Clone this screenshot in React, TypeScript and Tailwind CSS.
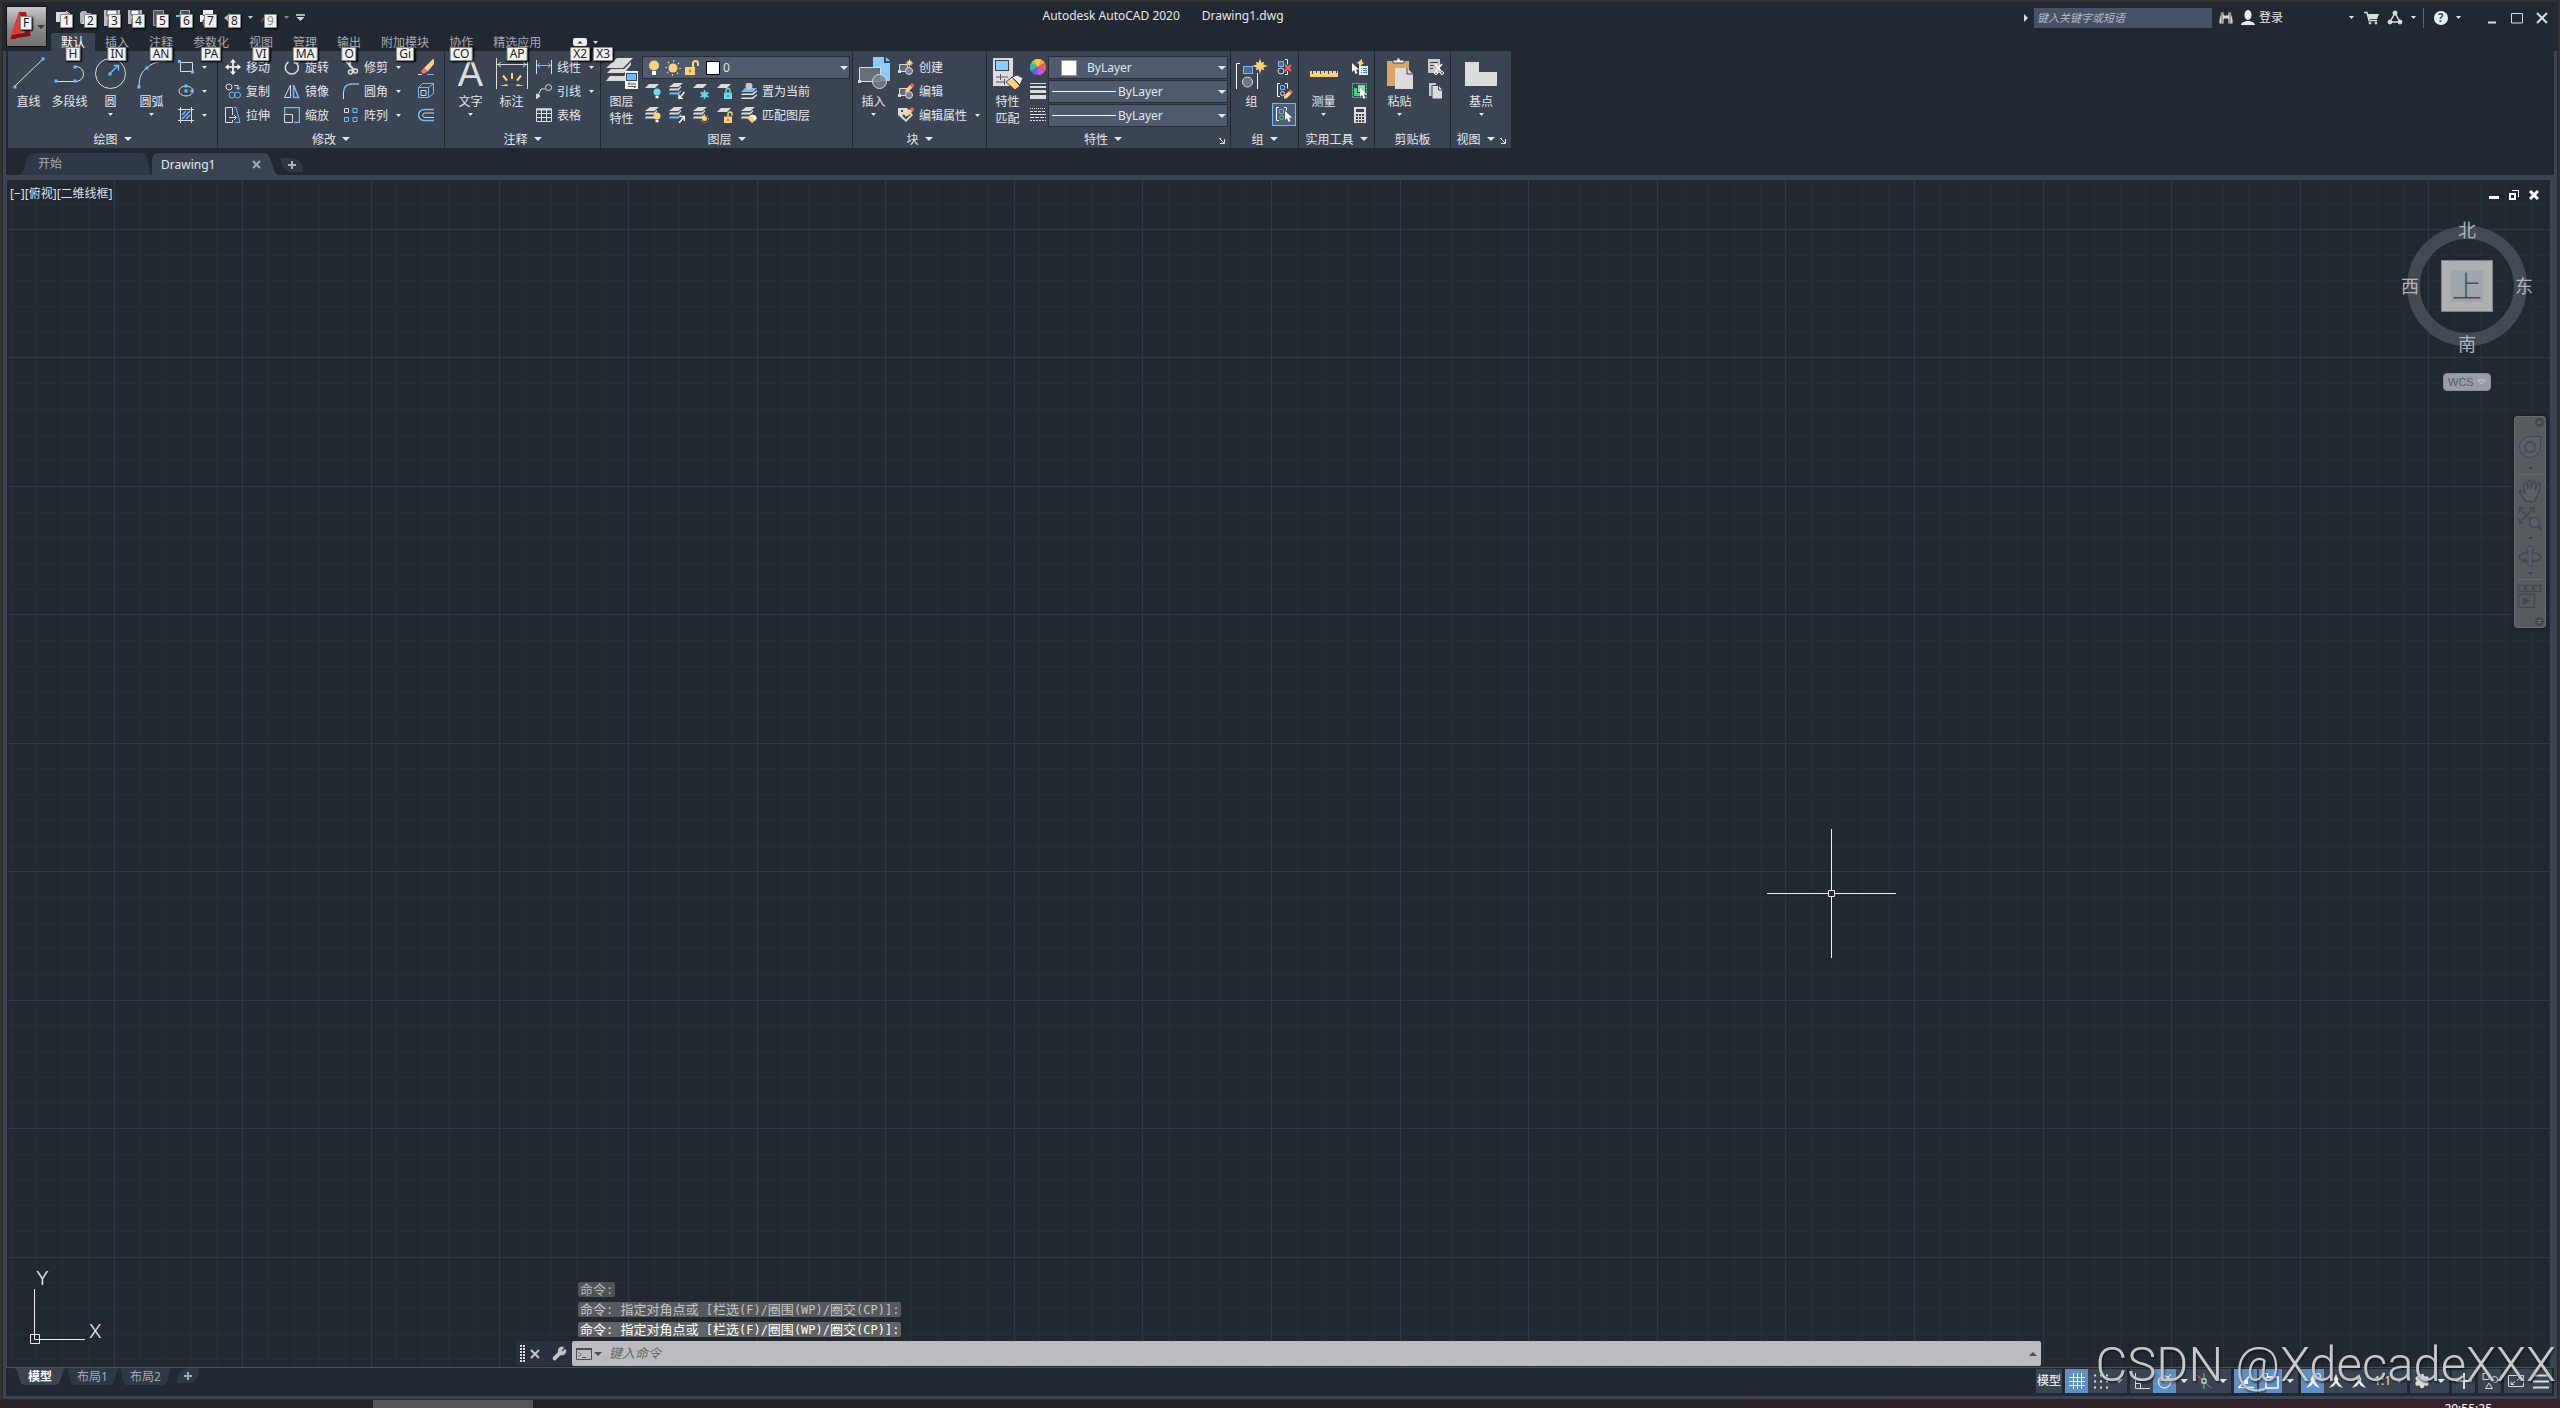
import type { ReactNode } from "react";
import { Settings, Wrench } from "lucide-react";

const W = "#dcdcdc";
const B = "#6cbcff";
const Y = "#ffd27a";
const C = "#6adbe6";
const R = "#ff5d5d";
const G = "#4fd07a";
const D = "#3b4453";

function Svg(props: { w?: number; h?: number; children: ReactNode }) {
  const w = props.w ?? 16;
  const h = props.h ?? w;
  return (
    <svg width={w} height={h} viewBox={`0 0 ${w} ${h}`} fill="none" stroke={W} className="shrink-0">
      {props.children}
    </svg>
  );
}

function Caret(props: { small?: boolean; className?: string }) {
  return props.small ? (
    <svg width="5" height="3" viewBox="0 0 5 3" className={`shrink-0 ${props.className ?? ""}`}>
      <path d="M0 0h5L2.5 3z" fill="currentColor" />
    </svg>
  ) : (
    <svg width="8" height="4" viewBox="0 0 8 4" className={`shrink-0 ${props.className ?? ""}`}>
      <path d="M0 0h8L4 4z" fill="currentColor" />
    </svg>
  );
}

function Dot(props: { x: number; y: number }) {
  return <rect x={props.x - 1.5} y={props.y - 1.5} width="3" height="3" fill={B} stroke="none" />;
}

function Sheet(props: { y: number; fill?: string }) {
  return <path d={`M4 ${props.y}h10l-4 4H0z`} fill={props.fill ?? W} stroke="none" />;
}

function Sheets(props: { last?: string }) {
  return (
    <g stroke="none" fill={W}>
      <path d="M5 0h9L9.500 4H0z" />
      <path d="M0 7l1-1.500h8L12 3v1.500L9.500 7.500H0z" />
      <path d="M0 11l1-1.500h8L12 7v1.500L9.500 11.500H0z" fill={props.last ?? W} />
    </g>
  );
}

function Lock(props: { color: string; open?: boolean }) {
  return (
    <>
      <rect x="7" y="9.500" width="8" height="6.500" fill={props.color} stroke="none" />
      <path
        d={props.open ? "M11 9.500V7a2 2 0 0 1 4 0v1.500" : "M9 9.500V7.500a2 2 0 0 1 4 0v2"}
        stroke={props.color}
        strokeWidth="1.500"
      />
      <rect x="10.500" y="12" width="1" height="2" fill={D} stroke="none" />
    </>
  );
}

function Bulb(props: { color: string }) {
  return (
    <>
      <circle cx="12" cy="9" r="3.500" fill={props.color} stroke="none" />
      <path d="M10.500 14h3" stroke="#fff" strokeWidth="2.500" />
    </>
  );
}

function Star(props: { x: number; y: number; r: number }) {
  const { x, y, r } = props;
  const points = Array.from({ length: 16 }, (_, i) => {
    const a = (i * Math.PI) / 8;
    const d = i % 2 ? r * 0.45 : i % 4 ? r * 0.75 : r;
    return `${x + d * Math.cos(a)},${y + d * Math.sin(a)}`;
  }).join(" ");
  return <polygon points={points} fill={Y} stroke="none" />;
}

function Pencil() {
  return (
    <g stroke="none">
      <path d="M8 6l4-4 2.500 2.500-4 4L7 9.500z" fill={Y} />
      <path d="M12 2l2-2 2.500 2.500-2 2z" fill={R} />
    </g>
  );
}

function Cursor(props: { x: number; y: number }) {
  const { x, y } = props;
  return <path d={`M${x} ${y}v9l2-2 1.500 4 2-1-1.500-3.500h3z`} fill="#fff" stroke="none" />;
}

function BlockBase() {
  return (
    <>
      <path d="M1.500 12V5.500h8v7H1.500" fill="#646c79" />
      <rect x="0" y="11" width="3" height="3" fill={W} stroke="none" />
      <circle cx="11" cy="12" r="3.500" fill="#7b828d" />
    </>
  );
}

// Large 32px ribbon icons
const big = {
  line: <Svg w={32}><path d="M2 29L29 3" /><Dot x={2} y={30} /><Dot x={30} y={2} /></Svg>,
  polyline: <Svg w={32}><path d="M2 24.500h20a7.500 7.500 0 0 0 0-15" /><Dot x={2} y={24} /><Dot x={21} y={24} /><Dot x={21} y={10} /></Svg>,
  circle: <Svg w={32}><circle cx="15.500" cy="16.500" r="15" /><path d="M15 16.500l8-8M18.500 8.500H23.500v5" stroke={B} strokeWidth="1.500" /><Dot x={15} y={17} /></Svg>,
  arc: <Svg w={32}><path d="M3 30C3 20 6 14 11 11 16 6 22 4 31 4" /><Dot x={3} y={30} /><Dot x={11} y={11} /></Svg>,
  dimension: (
    <Svg w={32}>
      <path d="M.5 1v32M31.500 1v32M1 7.500h30M5 5L2 7.500 5 10M27 5l3 2.500L27 10" />
      <g fill={Y} stroke="none"><path d="M15 16h2v6h-2zM6 19l2-1 4 5-2 1zM26 19l-2-1-4 5 2 1zM4 29l7-2 1 2zM28 29l-7-2-1 2z" /></g>
    </Svg>
  ),
  layers: (
    <Svg w={32}>
      <g fill={W} stroke="none">
        <path d="M11 1h16L17 11H0z" /><path d="M5 12h13l7-7v3l-7 8H1z" /><path d="M4 19h14l4-4v9H0z" />
        <rect x="19" y="14" width="13" height="18" fill="#f4f4f4" />
      </g>
      <rect x="20.500" y="16.500" width="10" height="7" fill={B} stroke={D} />
      <path d="M22 27h8M22 29.500h8M24 25.500L22 27M28 31l2-1.500" stroke="#555" />
    </Svg>
  ),
  insert: (
    <Svg w={32}>
      <path d="M15 0h11v6h6v18H15z" fill="#8accff" stroke="none" /><path d="M28 0l4 4h-4z" fill="#8accff" stroke="none" />
      <path d="M1.500 24V10.500h21v14H1.500" fill="#666e7a" /><rect x="0" y="23" width="3" height="3" fill={W} stroke="none" />
      <circle cx="21.500" cy="24.500" r="7" fill="#7b828dcc" />
    </Svg>
  ),
  match: (
    <Svg w={32}>
      <rect x="1" y="1" width="20" height="28" fill={W} stroke="none" /><rect x="3.500" y="3.500" width="13" height="10" fill="#8accff" stroke={D} />
      <path d="M4 20h12M4 25h9M8.500 17v6M12.500 22v6" stroke="#555" />
      <path d="M14 25l6-5 8 9-5 4z" fill={Y} stroke={D} /><path d="M20 20l5-2 6 3-3 7z" fill="#eee" stroke={D} />
    </Svg>
  ),
  group: (
    <Svg w={32}>
      <path d="M4 6.500H.5v26H4M18 32.500h3.500V16" stroke="#fff" /><rect x="7.500" y="9.500" width="9" height="7" stroke={B} fill="#4b6a8c" />
      <circle cx="11.500" cy="25" r="5" fill="#6d747f" /><Star x={24} y={9} r={8} />
    </Svg>
  ),
  measure: (
    <Svg w={32}>
      <path d="M2 14h28v6H2z" fill={Y} stroke="none" /><path d="M4.500 14v3M8.500 14v2M12.500 14v3M16.500 14v2M20.500 14v3M24.500 14v2M28.500 14v2" stroke={D} />
    </Svg>
  ),
  paste: (
    <Svg w={32}>
      <path d="M3 4h22v25H3z" fill="#d8a566" stroke="none" /><path d="M9 6V3h4V1h3v2h4v3z" fill="#fff" stroke={D} />
      <path d="M11 11h12l6 6v16H11z" fill={W} stroke="none" /><path d="M23 11v6h6" stroke={D} />
    </Svg>
  ),
  base: <Svg w={32}><path d="M0 5h14v10h18v14H0z" fill={W} stroke="none" /></Svg>,
};

// Small 16px ribbon icons
const small = {
  rect: <Svg><path d="M2.500 3.500h12v9h-12z" /><Dot x={1.500} y={2.500} /><Dot x={14.500} y={13} /></Svg>,
  ellipse: <Svg><ellipse cx="8" cy="8" rx="7" ry="5" /><Dot x={8} y={3} /><Dot x={8} y={8} /><Dot x={14} y={8} /></Svg>,
  hatch: <Svg><path d="M0 2.500h16M0 13.500h16M2.500 0v16M13.500 0v16" /><path d="M4 8l4-4M4 12l8-8M8 12l4-4" stroke={B} strokeWidth="1.500" /></Svg>,
  move: <Svg><path d="M8 2v12M2 8h12" strokeWidth="2" /><path d="M8 0l3 3.500H5zM8 16l3-3.500H5zM0 8l3.500-3v6zM16 8l-3.500-3v6z" fill="#fff" stroke="none" /></Svg>,
  copy: <Svg><circle cx="4" cy="4" r="3" /><path d="M9 2.500h4V6M11 4.500l2 2 2-2" /><circle cx="7" cy="12" r="3" stroke={B} /><circle cx="12.500" cy="12" r="3" stroke={B} /></Svg>,
  stretch: <Svg><path d="M7.500 8V.5h-7v15h7V13M4 10.500h7M9 8l2.500 2.500L9 13" /><path d="M9 .5h2l4 15h-5" stroke={B} /></Svg>,
  rotate: <Svg><path d="M10 2.500A6.500 6.500 0 1 1 4.500 3M10.500 0v4h4" strokeWidth="1.500" /></Svg>,
  mirror: <Svg><path d="M6.500 2v12.500h-6z" /><path d="M9.500 2v12.500h5z" stroke={B} strokeWidth="1.500" /></Svg>,
  scale: <Svg><path d="M.5 7V.5h15v15H10" stroke={B} strokeWidth="1.500" /><path d="M.5 7.500h8v8h-8z" /></Svg>,
  trim: <Svg><path d="M2 1l9 10M7 0v8" strokeWidth="2" /><circle cx="12.500" cy="12" r="2" strokeWidth="1.500" /><circle cx="7.500" cy="13" r="2" strokeWidth="1.500" /></Svg>,
  fillet: <Svg><path d="M.5 16V9M9 1h7" /><path d="M.5 9Q1 1 9 1" stroke={B} strokeWidth="1.500" /></Svg>,
  array: <Svg><path d="M1.500 1.500h4v4h-4z" /><path d="M10 1.500h4v4h-4zM1.500 10.500h4v4h-4zM10 10.500h4v4h-4z" stroke={B} /></Svg>,
  erase: <Svg><path d="M15 0h1v5l-5 6-4-3z" fill={Y} stroke="none" /><path d="M7 8l4 3-1 1-4-3z" fill="#fff" stroke="none" /><path d="M6 9l4 3-3 2.500H4L3 12z" fill="#ff6b6b" stroke="none" /><path d="M0 15.500h4" /><path d="M9 15.500h7" stroke={B} /></Svg>,
  solid: <Svg><path d="M.5 4.500h10v10H.5zM.5 4.500l4-4h11v10l-5 4M10.500 4.500l5-4" stroke={B} /><path d="M3 7.500h5v5H3z" /></Svg>,
  offset: <Svg><path d="M16 2.500H6a5.500 5.500 0 0 0 0 11h10" stroke={B} strokeWidth="1.500" /><path d="M16 6H7a2 2 0 0 0 0 4.500h9" /></Svg>,
  linear: <Svg><path d="M.5 1v14M15.500 1v14" /><path d="M1 6.500h14M4 4L1.500 6.500 4 9M12 4l2.500 2.500L12 9" stroke={B} /></Svg>,
  leader: <Svg><path d="M1 15l4-9h4" /><path d="M0 16l.5-5L4 13z" fill={W} /><circle cx="12.500" cy="4.500" r="3" /></Svg>,
  table: <Svg><path d="M.5 2h15v12.500H.5z" /><path d="M0 2.500h16" strokeWidth="2" /><path d="M0 6.500h16M0 10.500h16M5.500 3v11M10.500 3v11" /></Svg>,
  layerOff: <Svg><Sheet y={1} /><Bulb color={C} /></Svg>,
  layerIso: <Svg><Sheets last={B} /><path d="M15.500 9l-5 6M10 11.500V15.500h4" stroke="#fff" strokeWidth="1.500" /></Svg>,
  layerFreeze: <Svg><Sheet y={1} /><path d="M11.500 7v9M7.500 9.500l8 4.500M15.500 9.500l-8 4.500" stroke={C} strokeWidth="1.500" /><circle cx="11.500" cy="11.500" r="2.500" stroke={C} /></Svg>,
  layerLock: <Svg><Sheet y={1} /><Lock color={C} /></Svg>,
  makeCurrent: <Svg><path d="M4 5h12l-4 4H0z" fill={B} stroke="none" /><path d="M0 12l1-1.500h10L16 7v1.500L12 12zM0 16l1-1.500h10l5-3.500v1.500L12 16z" fill={W} stroke="none" /><circle cx="8" cy="3" r="3.500" fill="#c4c8ce" stroke="none" /></Svg>,
  layerOn: <Svg><Sheets /><Bulb color={Y} /></Svg>,
  layerUniso: <Svg><Sheets last={B} /><path d="M10 16l5-6M11 9.500h4.500V14" stroke="#fff" strokeWidth="1.500" /></Svg>,
  layerThaw: <Svg><Sheets /><circle cx="11.500" cy="11.500" r="2.500" fill={Y} stroke="none" /><circle cx="11.500" cy="11.500" r="4" stroke={Y} strokeDasharray="1 2" /></Svg>,
  layerUnlock: <Svg><Sheet y={1} /><Lock color={Y} open /></Svg>,
  layerMatch: <Svg><Sheets /><path d="M6 11l3-2.500 5 5L11 16z" fill={Y} stroke="none" /><path d="M9 8l5 0 2 3-2 3z" fill="#fff" stroke="none" /></Svg>,
  create: <Svg><BlockBase /><Star x={11.500} y={4} r={4.500} /></Svg>,
  edit: <Svg><BlockBase /><Pencil /></Svg>,
  editAttr: <Svg><path d="M0 1h9l6 7-7 7-8-7z" fill={W} stroke="none" /><path d="M3 4h2M5 8l3 3 4-4" stroke={D} strokeWidth="2" /><Pencil /></Svg>,
  color: (
    <Svg>
      <g stroke="none">
        <path d="M8 8V0a8 8 0 0 1 7 4z" fill="#ff9a4d" /><path d="M8 8l7-4a8 8 0 0 1 0 8z" fill="#ef5a5a" /><path d="M8 8l7 4a8 8 0 0 1-7 4z" fill="#c05ae0" />
        <path d="M8 8v8a8 8 0 0 1-7-4z" fill="#6a5cf5" /><path d="M8 8l-7 4a8 8 0 0 1 0-8z" fill="#3fb8a8" /><path d="M8 8L1 4a8 8 0 0 1 7-4z" fill="#8fd05a" /><path d="M8 8L4.500 1A8 8 0 0 1 11 .5z" fill="#ffc845" />
      </g>
    </Svg>
  ),
  weight: <Svg><path d="M0 .5h16" /><path d="M0 4h16" strokeWidth="2" /><path d="M0 8.500h16" strokeWidth="3" /><path d="M0 14h16" strokeWidth="4" /></Svg>,
  linetype: <Svg><path d="M0 1.500h16" strokeDasharray="1 1" /><path d="M0 4.500h16" strokeDasharray="3 1" /><path d="M0 7.500h16" /><path d="M0 10.500h16" strokeDasharray="4 1" /><path d="M0 13.500h16" strokeDasharray="2 1" /></Svg>,
  ungroup: <Svg><path d="M1.500 2.500h5v5h-5z" stroke={B} fill="#4b6a8c" /><circle cx="4" cy="12" r="3" /><path d="M8 .5h2.500v5M10.500 12v3.500H8" stroke="#fff" /><path d="M8 6l6 6M14 6l-6 6" stroke={R} strokeWidth="2" /></Svg>,
  groupEdit: <Svg><path d="M3 .5H.5v13H3M8 .5h2.500v5" stroke="#fff" /><path d="M3.500 2.500h4v4h-4z" stroke={B} /><circle cx="5.500" cy="10.500" r="2" /><path d="M7 13l5-5 2.500 2.500-5 5H7z" fill={Y} stroke="none" /><path d="M12 8l1.500-1.500L16 9l-1.500 1.500z" fill={R} stroke="none" /></Svg>,
  groupSelect: <Svg><path d="M3 .5H.5v13H3M8 .5h2.500v3" stroke="#fff" /><path d="M3.500 2.500h4v4h-4z" stroke={G} /><circle cx="5.500" cy="10.500" r="2" stroke={G} /><Cursor x={9} y={4} /></Svg>,
  quickSelect: <Svg><path d="M5 4l5-4v3l2 1-5 4V5z" fill={Y} stroke="none" /><Cursor x={0} y={4} /><path d="M7 7h9v9H7z" fill="#eee" stroke="none" /><path d="M9 9.500h1M9 11.500h1M9 13.500h1M11 9.500h4M11 11.500h4M11 13.500h4" stroke="#3a8fe0" /></Svg>,
  selectAll: <Svg><path d="M.5 .5h14v14H.5z" stroke={G} strokeDasharray="2 1" /><path d="M2 5h3v5h4v3H2z" fill={G} stroke="none" /><path d="M6 2h7v7H6z" fill="#8fdca8" stroke="none" /><Cursor x={8} y={5} /></Svg>,
  calc: <Svg><path d="M2 0h12v16H2z" fill={W} stroke="none" /><path d="M4 3.500h8" stroke="#444" strokeWidth="3" /><path d="M4 8h8M4 11h8M4 14h8" stroke="#444" strokeWidth="2" strokeDasharray="2 1" /></Svg>,
  cut: <Svg><path d="M0 0h12v14H0z" fill="#c9c9c9" stroke="none" /><path d="M2 3.500h8M2 6.500h4M2 9.500h3" stroke="#444" /><path d="M7 5l6 7M14 5l-6 7" stroke="#fff" strokeWidth="1.500" /><circle cx="8" cy="14" r="1.500" stroke="#fff" /><circle cx="14" cy="14" r="1.500" stroke="#fff" /></Svg>,
  copyClip: <Svg><path d="M1 0h7v13H1z" fill="#c9c9c9" stroke="none" /><path d="M4 2.500h7l3.500 4V16H4z" fill={W} stroke={D} /><path d="M10.500 3v4h4" stroke={D} /></Svg>,
};

function KeyTip(props: { label: string; className: string; dim?: boolean }) {
  return (
    <span
      className={`absolute z-20 flex h-[14px] min-w-[12px] items-center justify-center rounded-[1px] border border-[#8b8b8b] bg-[#f1f1f1] px-[2px] text-xs leading-none shadow-[1px_1px_2px_#000] ${props.dim ? "text-[#8a8a8a]" : "text-[#222]"} ${props.className}`}
    >
      {props.label}
    </span>
  );
}

function BigButton(props: { icon: ReactNode; label: ReactNode; caret?: boolean }) {
  return (
    <button className="flex w-[41px] shrink-0 flex-col items-center self-start pt-[2px] leading-[17px]">
      <span className="flex size-8 items-center justify-center">{props.icon}</span>
      <span className="mt-1 whitespace-nowrap">{props.label}</span>
      {props.caret && <Caret small className="mt-[3px]" />}
    </button>
  );
}

function ToolButton(props: { icon: ReactNode; label?: string; caret?: boolean; title?: string }) {
  return (
    <button aria-label={props.title} className="flex h-6 items-center gap-[5px] whitespace-nowrap">
      {props.icon}
      {props.label && <span className="pt-[2px]">{props.label}</span>}
      {props.caret && <Caret small className="ml-[3px]" />}
    </button>
  );
}

function Panel(props: { title: string; width: string; children: ReactNode; noCaret?: boolean; launcher?: boolean }) {
  return (
    <section className={`flex h-[97px] shrink-0 flex-col bg-[#3b4453] ${props.width}`}>
      <div className="flex flex-1 pt-1">{props.children}</div>
      <div className="flex h-[18px]">
        <button className="flex flex-1 items-center justify-center gap-[6px]">
          <span className="pt-[2px]">{props.title}</span>
          {!props.noCaret && <Caret />}
        </button>
        {props.launcher && (
          <button aria-label="对话框启动器" className="w-[11px] pt-1">
            <Svg w={6}><path d="M0 .5h2M1 1l4 4M5.500 1v4.500H1" /></Svg>
          </button>
        )}
      </div>
    </section>
  );
}

function Combo(props: { label: string; value: string; lead: ReactNode }) {
  return (
    <div className="relative mt-px flex h-[23px] items-center border border-[#282e39] bg-[#4e5a6e]">
      {props.lead}
      <select aria-label={props.label} className="h-full min-w-0 flex-1 appearance-none bg-transparent outline-none">
        <option>{props.value}</option>
      </select>
      <Caret className="pointer-events-none absolute right-[1px]" />
    </div>
  );
}

const quickAccess: { tip: string; name: string; icon: ReactNode }[] = [
  { tip: "1", name: "新建", icon: <Svg><path d="M0 2h10l5 4v6H0z" fill={W} stroke="none" /><path d="M10 1l5 4" stroke="#fff" /></Svg> },
  { tip: "2", name: "打开", icon: <Svg><path d="M0 14V3l2-2h4l1 2h4v3H5z" fill="#b5b5b5" stroke="none" /><path d="M4 6h11l-4 8H1z" fill={W} stroke="none" /></Svg> },
  { tip: "3", name: "保存", icon: <Svg><path d="M0 0h16v16H0z" fill="#b9bcc0" stroke="none" /><path d="M3 0h10v6H3zM4 10h8v6H4z" fill="#fff" stroke="#444" /></Svg> },
  { tip: "4", name: "另存为", icon: <Svg><path d="M0 0h14v14H0z" fill="#b9bcc0" stroke="none" /><path d="M3 0h8v5H3zM4 9h7v5H4z" fill="#fff" stroke="#444" /></Svg> },
  { tip: "5", name: "从云端打开", icon: <Svg><path d="M1.500 .5h10v15h-10z" fill="#555a60" stroke="#999" /></Svg> },
  { tip: "6", name: "保存到云端", icon: <Svg><path d="M4.500 .5h9v14h-9z" fill="#44515f" stroke="#aaa" /><path d="M0 6h6M4 3l3 3-3 3" stroke={B} strokeWidth="2" /></Svg> },
  { tip: "7", name: "打印", icon: <Svg><path d="M3 0h10v5H3zM0 5h16v7H0z" fill="#f4f4f4" stroke="none" /><path d="M3 5.500h10M3 10h10v6H3z" fill="#ddd" stroke="#333" /></Svg> },
  { tip: "8", name: "放弃", icon: <Svg><path d="M0 8l6-5v3c5 0 8 2 8 7-2-3-4-3-8-3v3z" fill="#b8b8b8" stroke="none" /></Svg> },
];

const ribbonTabs = [
  ["默认", "H"], ["插入", "IN"], ["注释", "AN"], ["参数化", "PA"], ["视图", "VI"],
  ["管理", "MA"], ["输出", "O"], ["附加模块", "Gi"], ["协作", "CO"], ["精选应用", "AP"],
];

function TitleBar() {
  return (
    <div className="flex h-[31px] items-center">
      <div className="flex items-center pl-[5px]">
        {quickAccess.map((item) => (
          <button key={item.tip} aria-label={item.name} className="relative flex size-6 items-center justify-center">
            {item.icon}
            <KeyTip label={item.tip} className="left-2 top-2" />
          </button>
        ))}
        <button aria-label="放弃列表" className="flex h-6 w-3 items-center justify-center text-[#c8c8c8]"><Caret small /></button>
        <button aria-label="重做" className="relative flex size-6 items-center justify-center">
          <Svg><path d="M15 8L9 3v3C4 6 1 8 1 13c2-3 4-3 8-3v3z" fill="#555b63" stroke="none" /></Svg>
          <KeyTip label="9" dim className="left-2 top-2" />
        </button>
        <button aria-label="重做列表" className="flex h-6 w-3 items-center justify-center text-[#888]"><Caret small /></button>
        <button aria-label="自定义快速访问工具栏" className="flex h-6 w-4 items-center justify-center">
          <Svg w={9} h={7}><path d="M0 1h9" strokeWidth="1.500" /><path d="M.5 3h8L4.500 7z" fill={W} stroke="none" /></Svg>
        </button>
      </div>
      <h1 className="flex-1 whitespace-pre pb-[3px] text-center">Autodesk AutoCAD 2020{"       "}Drawing1.dwg</h1>
      <button aria-label="展开搜索" className="flex h-5 w-4 items-center justify-center">
        <Svg w={4} h={8}><path d="M0 0l4 4-4 4z" fill={W} stroke="none" /></Svg>
      </button>
      <input
        aria-label="搜索"
        placeholder="键入关键字或短语"
        className="h-5 w-[178px] bg-[#485266] px-[3px] text-[11px] italic outline-none placeholder:text-[#b4bac4]"
      />
      <button aria-label="查找" className="flex h-6 w-[27px] items-center justify-center">
        <Svg><path d="M3 2h3v3h4V2h3l2 8v4h-5V9H6v5H1v-4z" fill="#dadada" stroke="#333" /><path d="M4 3v10M12 3v10" stroke="#666" /></Svg>
      </button>
      <button className="flex h-6 w-[115px] items-center gap-1">
        <Svg><ellipse cx="9" cy="5" rx="3.500" ry="5" fill="#eaeaea" stroke="none" /><path d="M2 15c0-3 4-3 5-4h4c1 1 5 1 5 4z" fill="#eaeaea" stroke="none" /></Svg>
        登录
        <Caret small className="ml-auto" />
      </button>
      <button aria-label="应用商店" className="ml-[6px] flex size-6 items-center justify-center">
        <Svg><path d="M0 2.500h3l2 8h8" strokeWidth="1.500" /><path d="M4 4h11l-2 5H5z" fill={W} stroke="none" /><circle cx="6" cy="13" r="1" fill={W} /><circle cx="12" cy="13" r="1" fill={W} /></Svg>
      </button>
      <button aria-label="保持连接" className="flex h-6 w-[34px] items-center justify-center gap-2">
        <Svg><path d="M8 3l5 9H3z" strokeWidth="1.500" /><circle cx="8" cy="3" r="2" fill={W} /><circle cx="3" cy="12" r="2" fill={W} /><circle cx="13" cy="12" r="2" fill={W} /></Svg>
        <Caret small />
      </button>
      <span className="mx-[5px] h-5 w-px bg-[#5a6372]" />
      <button aria-label="帮助" className="flex h-6 w-[36px] items-center justify-center gap-2">
        <span className="flex size-[14px] items-center justify-center rounded-full bg-[#f0f0f0] text-[12px] font-bold text-[#2355b8]">?</span>
        <Caret small />
      </button>
      <div className="flex items-center gap-[13px] pl-[21px] pr-[9px]">
        <button aria-label="最小化" className="w-3"><Svg w={12}><path d="M2 10.500h8" strokeWidth="2" /></Svg></button>
        <button aria-label="最大化" className="w-3"><Svg w={12}><path d="M.5 1.500h11v9.500H.5z" strokeWidth="1" /></Svg></button>
        <button aria-label="关闭" className="w-3"><Svg w={12}><path d="M1 1l10 10M11 1L1 11" strokeWidth="2" /></Svg></button>
      </div>
    </div>
  );
}

function Header() {
  return (
    <header className="flex h-[49px] shrink-0 pl-[3px]">
      <button
        aria-label="应用程序"
        className="relative mt-1 flex size-[41px] items-center border border-[#111] bg-linear-to-b from-[#c9c9c9] via-[#8d8d8d] to-[#6f6f6f]"
      >
        <Svg w={30} h={36}>
          <path d="M3 30L12 3h7l5 24h-6L16 12 9 30z" fill="#b3151b" stroke="none" /><path d="M3 30l10-5 3-13L12 3z" fill="#e03a3a" stroke="none" /><path d="M5 26l18-3v4l-19 3z" fill="#8d0d12" stroke="none" />
        </Svg>
        <Caret className="text-[#333b48]" />
        <KeyTip label="F" className="left-[13px] top-[9px]" />
      </button>
      <div className="flex min-w-0 flex-1 flex-col">
        <TitleBar />
        <nav className="flex h-[18px] pl-1 text-[#a4aab3]">
          {ribbonTabs.map(([name, tip], i) => (
            <button
              key={tip}
              className={`relative rounded-t-[2px] px-[10px] leading-[17px] ${i === 0 ? "bg-[#3b4453] text-white" : ""}`}
            >
              {name}
              <KeyTip label={tip} className="left-1/2 top-[14px] -translate-x-1/2" />
            </button>
          ))}
          <button aria-label="最小化功能区" className="relative ml-5 flex w-[18px] items-center justify-center">
            <Svg w={14} h={8}><rect width="14" height="8" rx="2" fill="#eee" stroke="none" /><path d="M4.500 5.500h5L7 3z" fill="#333" stroke="none" /></Svg>
            <KeyTip label="X2" className="left-1/2 top-[14px] -translate-x-1/2" />
          </button>
          <button aria-label="功能区选项" className="relative ml-1 flex w-2 items-center text-[#dcdcdc]">
            <Caret small />
            <KeyTip label="X3" className="left-0 top-[14px]" />
          </button>
        </nav>
      </div>
    </header>
  );
}

function Ribbon() {
  return (
    <div className="flex gap-px pl-[2px] text-[#e4e7eb]">
      <Panel title="绘图" width="w-[209px]">
        <BigButton icon={big.line} label="直线" />
        <BigButton icon={big.polyline} label="多段线" />
        <BigButton icon={big.circle} label="圆" caret />
        <BigButton icon={big.arc} label="圆弧" caret />
        <div className="flex flex-col pl-[6px]">
          <ToolButton icon={small.rect} title="矩形" caret />
          <ToolButton icon={small.ellipse} title="椭圆" caret />
          <ToolButton icon={small.hatch} title="图案填充" caret />
        </div>
      </Panel>
      <Panel title="修改" width="w-[226px]">
        <div className="flex w-[66px] flex-col pl-[7px]">
          <ToolButton icon={small.move} label="移动" />
          <ToolButton icon={small.copy} label="复制" />
          <ToolButton icon={small.stretch} label="拉伸" />
        </div>
        <div className="flex w-[59px] flex-col">
          <ToolButton icon={small.rotate} label="旋转" />
          <ToolButton icon={small.mirror} label="镜像" />
          <ToolButton icon={small.scale} label="缩放" />
        </div>
        <div className="flex w-[75px] flex-col">
          <ToolButton icon={small.trim} label="修剪" caret />
          <ToolButton icon={small.fillet} label="圆角" caret />
          <ToolButton icon={small.array} label="阵列" caret />
        </div>
        <div className="flex flex-col">
          <ToolButton icon={small.erase} title="删除" />
          <ToolButton icon={small.solid} title="分解" />
          <ToolButton icon={small.offset} title="偏移" />
        </div>
      </Panel>
      <Panel title="注释" width="w-[155px]">
        <div className="flex pl-[5px]">
          <BigButton icon={<span className="font-['Liberation_Sans'] text-[38px] leading-8 text-[#dcdcdc]">A</span>} label="文字" caret />
          <BigButton icon={big.dimension} label="标注" />
        </div>
        <div className="flex flex-col pl-1">
          <ToolButton icon={small.linear} label="线性" caret />
          <ToolButton icon={small.leader} label="引线" caret />
          <ToolButton icon={small.table} label="表格" />
        </div>
      </Panel>
      <Panel title="图层" width="w-[251px]">
        <BigButton icon={big.layers} label={<>图层<br />特性</>} />
        <div className="flex flex-1 flex-col pr-[2px]">
          <div className="h-6">
            <Combo
              label="图层"
              value="0"
              lead={
                <span className="flex items-center gap-[3px] pl-[3px] pr-[3px]">
                  <Svg><circle cx="8" cy="5.500" r="5" fill={Y} stroke="none" /><path d="M6 13h4" stroke="#fff" strokeWidth="4" /></Svg>
                  <Svg><circle cx="8" cy="8" r="4.500" fill={Y} stroke="none" /><circle cx="8" cy="8" r="7" stroke={Y} strokeWidth="2" strokeDasharray="1 4.500" /></Svg>
                  <Svg><path d="M1 7h10v8H1z" fill={Y} stroke="none" /><path d="M9 7V3.500a2.500 2.500 0 0 1 5 0V6" stroke={Y} strokeWidth="2" /><path d="M6 9.500v3" stroke={D} /></Svg>
                  <span className="ml-[3px] size-[14px] border border-black bg-white" />
                </span>
              }
            />
          </div>
          <div className="flex gap-2 pl-[3px]">
            <ToolButton icon={small.layerOff} title="关" />
            <ToolButton icon={small.layerIso} title="隔离" />
            <ToolButton icon={small.layerFreeze} title="冻结" />
            <ToolButton icon={small.layerLock} title="锁定" />
            <ToolButton icon={small.makeCurrent} label="置为当前" />
          </div>
          <div className="flex gap-2 pl-[3px]">
            <ToolButton icon={small.layerOn} title="打开所有图层" />
            <ToolButton icon={small.layerUniso} title="取消隔离" />
            <ToolButton icon={small.layerThaw} title="解冻" />
            <ToolButton icon={small.layerUnlock} title="解锁" />
            <ToolButton icon={small.layerMatch} label="匹配图层" />
          </div>
        </div>
      </Panel>
      <Panel title="块" width="w-[133px]">
        <BigButton icon={big.insert} label="插入" caret />
        <div className="flex flex-col pl-1">
          <ToolButton icon={small.create} label="创建" />
          <ToolButton icon={small.edit} label="编辑" />
          <ToolButton icon={small.editAttr} label="编辑属性" caret />
        </div>
      </Panel>
      <Panel title="特性" width="w-[243px]" launcher>
        <BigButton icon={big.match} label={<>特性<br />匹配</>} />
        <div className="flex w-5 flex-col pl-[2px]">
          <ToolButton icon={small.color} title="颜色" />
          <ToolButton icon={small.weight} title="线宽" />
          <ToolButton icon={small.linetype} title="线型" />
        </div>
        <div className="flex flex-1 flex-col pr-[2px]">
          <Combo label="对象颜色" value="ByLayer" lead={<span className="ml-3 mr-[10px] size-4 border border-[#999] bg-white" />} />
          <Combo label="线宽" value="ByLayer" lead={<span className="ml-[3px] mr-[2px] h-px w-16 bg-white" />} />
          <Combo label="线型" value="ByLayer" lead={<span className="ml-[3px] mr-[2px] h-px w-16 bg-white" />} />
        </div>
      </Panel>
      <Panel title="组" width="w-[67px]">
        <BigButton icon={big.group} label="组" />
        <div className="flex flex-col">
          <span className="px-[5px]"><ToolButton icon={small.ungroup} title="解除编组" /></span>
          <span className="px-[5px]"><ToolButton icon={small.groupEdit} title="组编辑" /></span>
          <button aria-label="启用组选择" className="flex h-[23px] w-6 items-center justify-center border border-[#6cbcff] bg-[#4a6079]">
            {small.groupSelect}
          </button>
        </div>
      </Panel>
      <Panel title="实用工具" width="w-[75px]">
        <div className="pl-1"><BigButton icon={big.measure} label="测量" caret /></div>
        <div className="flex flex-col pl-2">
          <ToolButton icon={small.quickSelect} title="快速选择" />
          <ToolButton icon={small.selectAll} title="全部选择" />
          <ToolButton icon={small.calc} title="快速计算器" />
        </div>
      </Panel>
      <Panel title="剪贴板" width="w-[75px]" noCaret>
        <div className="pl-1"><BigButton icon={big.paste} label="粘贴" caret /></div>
        <div className="flex flex-col pl-2">
          <ToolButton icon={small.cut} title="剪切" />
          <ToolButton icon={small.copyClip} title="复制" />
        </div>
      </Panel>
      <Panel title="视图" width="w-[60px]" launcher>
        <div className="flex flex-1 justify-center"><BigButton icon={big.base} label="基点" caret /></div>
      </Panel>
    </div>
  );
}

function FileTabs() {
  return (
    <div className="flex h-[27px] items-end pl-3">
      <button className="h-[22px] w-[134px] bg-[#2f3846] pl-5 text-left text-[#a4aab3] [clip-path:path('M0_22C10_22_4_0_16_0H124C132_0_130_22_134_22Z')]">
        开始
      </button>
      <div className="flex h-[22px] w-[128px] items-center bg-[#3b4453] pl-[9px] text-[#e4e7eb] [clip-path:path('M0_22V6Q1_0_6_0H112C122_0_118_22_128_22Z')]">
        <button className="pt-px">Drawing1</button>
        <button aria-label="关闭图形" className="ml-auto mr-[19px] text-[#a4aab3]">
          <Svg w={9}><path d="M1 1l7 7M8 1L1 8" stroke="#a4aab3" strokeWidth="2" /></Svg>
        </button>
      </div>
      <button aria-label="新图形" className="mb-[3px] ml-px flex h-[14px] w-[22px] items-center justify-center rounded-bl-xl rounded-tr-xl bg-[#2f3846]">
        <Svg w={8}><path d="M4 0v8M0 4h8" stroke="#b0b5bc" strokeWidth="2" /></Svg>
      </button>
    </div>
  );
}

// Every fifth line is a major one
function Grid() {
  const lines: ReactNode[] = [];
  for (let i = -4; i < 160; i++) {
    const pos = Math.floor(107 + i * 25.72) + 0.5;
    const major = i % 5 === 0;
    lines.push(<path key={`v${i}`} d={`M${pos} 0V2400`} stroke={major ? "#31384b" : "#272e39"} />);
  }
  for (let i = -1; i < 90; i++) {
    const pos = Math.round(49 + i * 25.69) + 0.5;
    const major = i % 5 === 0;
    lines.push(<path key={`h${i}`} d={`M0 ${pos}H4000`} stroke={major ? "#31384b" : "#272e39"} />);
  }
  return <svg className="absolute inset-0 size-full">{lines}</svg>;
}

function ViewCube() {
  return (
    <div className="absolute right-[13px] top-9 flex w-[140px] flex-col items-center text-lg leading-none text-[#b3b5b7]">
      <div className="relative flex size-[140px] items-center justify-center">
        <span className="absolute size-[120px] rounded-full border-[13px] border-[#444a53]" />
        <button className="absolute top-[5px]">北</button>
        <button className="absolute bottom-[3px]">南</button>
        <button className="absolute left-1">西</button>
        <button className="absolute right-1">东</button>
        <button className="relative flex size-[52px] items-center justify-center border border-[#7f8387] bg-[#adafb1] text-[#474c52]">
          <span className="flex size-8 items-center justify-center bg-[#9ea5ab] text-[30px] font-light">上</span>
        </button>
      </div>
      <button className="mt-[17px] flex h-[18px] w-12 items-center justify-between rounded-[4px] border border-[#8a8c9a] bg-[#9a9cab] px-1 font-['Liberation_Sans'] text-[11px] text-[#5c5f6b]">
        WCS
        <Svg w={9} h={6}><path d="M1 1h7L4.500 5z" stroke="#c9cbd5" /></Svg>
      </button>
    </div>
  );
}

function NavBar() {
  const ink = "#43484e";
  const caret = <Caret small className="text-[#3d4247]" />;
  return (
    <div className="absolute right-1 top-[236px] flex h-[212px] w-8 flex-col items-center rounded-[3px] border border-[#666b70] bg-[#565b60] shadow-[0_0_3px_#111]">
      <button aria-label="关闭导航栏" className="mt-px self-end pr-px"><Svg w={9}><circle cx="4.500" cy="4.500" r="4.500" fill={ink} stroke="none" /><path d="M3 3l3 3M6 3L3 6" stroke="#777" /></Svg></button>
      <button aria-label="全导航控制盘" className="mt-2"><Svg w={24}><path d="M12 1.500h10.500V12A10.500 10.500 0 1 1 12 1.500z" stroke={ink} fill="#5b616b" /><circle cx="12" cy="12" r="6" stroke={ink} /><path d="M7.500 16L4 20M16.500 16l4 4" stroke={ink} /><circle cx="12" cy="12" r="4.500" stroke={ink} /></Svg></button>
      <span className="mt-2">{caret}</span>
      <span className="mt-1 h-px w-6 bg-[#666b70]" />
      <button aria-label="平移" className="mt-1"><Svg w={24}><path d="M8 22.500L3 15 1 12.500q1-2 3.500 0L7 14.500 5.500 5q1.500-2 3 0L10 10V2.500q1.500-2 3 0V10l2-7q2-1.500 2.500 0L17 11l3-6q2-1 2.500.5L20 15l-3.500 7.500z" stroke={ink} strokeWidth="1.500" fill="#5b616b" /></Svg></button>
      <button aria-label="范围缩放" className="mt-1"><Svg w={24}><path d="M1.500 1.500l14 14M15.500 1.500l-14 14M1 6V1h5M11 1h5v5M1 11v5h5" stroke={ink} strokeWidth="1.500" /><circle cx="16.500" cy="15.500" r="5" stroke={ink} strokeWidth="1.500" fill="#5b616b" /><path d="M20 19l4 4" stroke={ink} strokeWidth="3" /></Svg></button>
      <span className="mt-[6px]">{caret}</span>
      <button aria-label="动态观察" className="mt-1"><Svg w={24}><ellipse cx="12" cy="13" rx="11" ry="4.500" stroke={ink} strokeWidth="1.500" /><path d="M12 1l4 5h-2v16h-4V6H8z" stroke={ink} fill="#5b616b" /><path d="M3 16.500l5-3v6z" fill={ink} stroke="none" /></Svg></button>
      <span className="mt-1">{caret}</span>
      <span className="mt-1 h-px w-6 bg-[#666b70]" />
      <button aria-label="ShowMotion" className="mt-1"><Svg w={24}><path d="M.5 1.500h6v6h-6zM8.500 1.500h6v6h-6zM16.500 1.500h6v6h-6zM.5 10.500h16v13H.5z" stroke={ink} strokeWidth="1.500" /><path d="M5 13l7 4-7 4z" fill={ink} stroke="none" /></Svg></button>
      <button aria-label="导航栏选项" className="mb-px mt-auto self-end pr-px"><Svg w={9}><circle cx="4.500" cy="4.500" r="4.500" fill={ink} stroke="none" /><path d="M3 3.500h3M3 5.500h3" stroke="#777" /></Svg></button>
    </div>
  );
}

// Latin runs are set smaller so that they take about half the width of a CJK glyph
function LogLine(props: { text: string; className: string }) {
  return (
    <p className={`flex h-[15px] items-center whitespace-pre rounded-[2px] px-[2px] text-[13px] ${props.className}`}>
      {props.text.split(/([\x20-\x7e]+)/).map((part, i) =>
        i % 2 ? <span key={i} className="font-['DejaVu_Sans_Mono'] text-xs">{part}</span> : part,
      )}
    </p>
  );
}

function CommandLine() {
  const prompt = "命令: 指定对角点或 [栏选(F)/圈围(WP)/圈交(CP)]:";
  return (
    <div className="absolute inset-x-[509px] bottom-px">
      <div className="mb-1 flex flex-col items-start gap-[5px] pl-[62px]">
        <LogLine text="命令:" className="bg-[#505356] text-[#b4b4b4]" />
        <LogLine text={prompt} className="bg-[#575a5c] text-[#c4c4c4]" />
        <LogLine text={prompt} className="bg-[#616364] text-white" />
      </div>
      <div className="flex h-[25px]">
        <div className="flex w-14 items-center rounded-l-[3px] bg-[#2a303d] pl-1">
          <Svg w={5} h={17}><path d="M1 0v17M4 0v17" strokeWidth="2" strokeDasharray="2 1" /></Svg>
          <button aria-label="关闭命令行" className="ml-[5px]"><Svg w={10}><path d="M1 1l8 8M9 1L1 9" stroke="#c4c4c4" strokeWidth="2" /></Svg></button>
          <button aria-label="自定义" className="ml-3"><Wrench className="size-[15px] fill-[#c4c4c4] text-[#c4c4c4]" /></button>
        </div>
        <div className="flex flex-1 items-center rounded-[2px] bg-[#bbbcbf] px-1 text-[#4c4c4c]">
          <Svg><path d="M.5 2.500h15v11H.5z" stroke="#4c4c4c" /><path d="M0 3h16" stroke="#4c4c4c" strokeWidth="2" /><path d="M3 6.500L5 8.500l-2 2M6 11.500h4" stroke="#4c4c4c" /></Svg>
          <Caret className="ml-[2px]" />
          <input aria-label="命令" placeholder="键入命令" className="ml-[3px] min-w-0 flex-1 bg-transparent px-1 text-[13px] italic outline-none placeholder:text-[#66676a]" />
          <Caret className="rotate-180" />
        </div>
      </div>
    </div>
  );
}

function Canvas() {
  return (
    <main className="relative min-h-0 flex-1 overflow-hidden border-b border-l border-r-4 border-b-[#4a4f5b] border-l-[#3b4453] border-r-[#3b4453] bg-[#212830]">
      <Grid />
      <p className="absolute left-[3px] top-[5px] leading-[18px] text-[#dfe1e3]">[−][俯视][二维线框]</p>
      <div className="absolute right-[11px] top-[10px] flex gap-[10px]">
        <button aria-label="最小化视口"><Svg w={10}><path d="M0 7.500h10" stroke="#fff" strokeWidth="3" /></Svg></button>
        <button aria-label="还原视口"><Svg w={10}><path d="M1 4h5v5H1z" stroke="#fff" strokeWidth="2" /><path d="M3 .5h6.500V7" stroke="#fff" /></Svg></button>
        <button aria-label="关闭视口"><Svg w={10}><path d="M1 1l8 8M9 1L1 9" stroke="#fff" strokeWidth="3" /></Svg></button>
      </div>
      <ViewCube />
      <NavBar />
      <svg className="absolute left-[1760px] top-[649px]" width="129" height="129" viewBox="0 0 129 129" fill="none" stroke="#f0f0ec">
        <path d="M64.500 0v61M64.500 68v61M0 64.500h61M68 64.500h61" />
        <path d="M61.500 61.500h6v6h-6z" />
      </svg>
      <svg className="absolute bottom-[22px] left-[22px]" width="80" height="80" viewBox="0 0 80 80" fill="none" stroke="#ececec">
        <path d="M5.500 24v50.500H56" />
        <path d="M1.500 69.500h9v9h-9z" />
        <g fill="#ececec" stroke="none" fontFamily="Inter" fontSize="19" fontWeight="300">
          <text x="7" y="20">Y</text>
          <text x="60" y="73">X</text>
        </g>
      </svg>
      <CommandLine />
    </main>
  );
}

function StatusButton(props: { label: string; children: ReactNode; active?: boolean; caret?: boolean }) {
  return (
    <button aria-label={props.label} className="flex h-full items-center">
      <span className={`flex h-full w-[23px] items-center justify-center ${props.active ? "bg-[#5f8fc4]" : ""}`}>{props.children}</span>
      {props.caret && <Caret className="mx-1" />}
    </button>
  );
}

const statusGroup = "flex h-6 items-center bg-[#3b4453]";

function Person(props: { children?: ReactNode }) {
  return <Svg><path d="M8 1l2.500 5.500L9.500 8l5.500 7-5-2-2-3-2 3-5 2 5.500-7-1-1.500z" fill="#f0f0f0" stroke="none" />{props.children}</Svg>;
}

function StatusBar() {
  return (
    <footer className="flex h-7 shrink-0 justify-between pl-[7px] pr-[2px]">
      <div className="flex h-[17px] items-start text-[#a4aab3]">
        <button className="h-[17px] w-[53px] bg-[#3b4453] pl-px font-bold leading-4 text-white [clip-path:path('M0_0H53C48_0_50_17_42_17H12C4_17_8_0_0_0Z')]">模型</button>
        <button className="h-[17px] w-[53px] bg-[#2f3846] leading-4 [clip-path:path('M0_0H53C50_0_50_17_44_17H8C2_17_4_0_0_0Z')]">布局1</button>
        <button className="h-[17px] w-[53px] bg-[#2f3846] leading-4 [clip-path:path('M0_0H53C50_0_50_17_44_17H8C2_17_4_0_0_0Z')]">布局2</button>
        <button aria-label="新建布局" className="ml-[5px] flex h-[15px] w-[22px] items-center justify-center rounded-br-xl rounded-tl-xl bg-[#2f3846]">
          <Svg w={8}><path d="M4 0v8M0 4h8" stroke="#a4aab3" strokeWidth="2" /></Svg>
        </button>
      </div>
      <div className="mt-px flex items-start gap-[3px] text-[#e4e7eb]">
        <button className="h-6 bg-[#3b4453] px-px font-medium">模型</button>
        <div className={statusGroup}>
          <StatusButton label="栅格" active><Svg><path d="M4.500 0v16M8.500 0v16M12.500 0v16M0 4.500h16M0 8.500h16M0 12.500h16" stroke="#fff" /></Svg></StatusButton>
          <StatusButton label="捕捉" caret><Svg><path d="M2 2.500h14M2 8.500h14M2 14.500h14" strokeWidth="2" strokeDasharray="2 4" /></Svg></StatusButton>
        </div>
        <div className={statusGroup}>
          <StatusButton label="正交"><Svg><path d="M1.500 0v15.500H16M1.500 10.500h5v5" /></Svg></StatusButton>
          <StatusButton label="极轴追踪" active caret><Svg><circle cx="7.500" cy="9" r="6" stroke="#fff" /><path d="M16 9H7l7-8" stroke="#fff" /></Svg></StatusButton>
          <StatusButton label="等轴测" caret><Svg><path d="M8 0v16" stroke={G} /><path d="M1 2l14 13" stroke={R} /><path d="M6 6h4v4H6z" fill={D} stroke="#fff" /></Svg></StatusButton>
        </div>
        <div className={`${statusGroup} gap-[2px]`}>
          <StatusButton label="对象捕捉追踪" active><Svg><path d="M0 14.500h16M1 14L13 2" stroke="#fff" strokeWidth="1.500" /><path d="M6 7h4v4H6z" fill="#fff" stroke="none" /></Svg></StatusButton>
          <StatusButton label="对象捕捉" active caret><Svg><path d="M3 4h12v11H3z" stroke="#fff" strokeWidth="1.500" /><path d="M.5 .5h4v4h-4z" fill="#5f8fc4" stroke="#fff" /></Svg></StatusButton>
        </div>
        <div className={statusGroup}>
          <StatusButton label="显示注释对象" active><Person><circle cx="13" cy="3" r="2.500" stroke="#fff" /></Person></StatusButton>
          <StatusButton label="自动缩放"><Person><path d="M12 1l3 3" /></Person></StatusButton>
          <StatusButton label="注释比例"><Person /></StatusButton>
          <button className="flex h-full items-center gap-1 px-1">1:1<Caret /></button>
        </div>
        <div className={statusGroup}>
          <StatusButton label="切换工作空间" caret><Settings className="size-4 fill-[#dcdcdc] text-[#dcdcdc]" /></StatusButton>
        </div>
        <div className={statusGroup}>
          <StatusButton label="注释监视器"><Svg><path d="M8 0v16M0 8h16" strokeWidth="2" /></Svg></StatusButton>
        </div>
        <div className={statusGroup}>
          <StatusButton label="隔离对象"><Svg><path d="M1 .5h6v6H1z" /><circle cx="12.500" cy="6.500" r="3" /><path d="M7 10l3.500 5.500h-7z" /></Svg></StatusButton>
        </div>
        <div className={`${statusGroup} gap-[2px]`}>
          <StatusButton label="全屏显示"><Svg><path d="M.5 2.500h15v11H.5zM9 7.500l4-3M10 4.500h3v3M7 8.500l-4 3M3 8.500v3h3" /></Svg></StatusButton>
          <StatusButton label="自定义"><Svg><path d="M0 2.500h16M0 8.500h16M0 14.500h16" strokeWidth="2" /></Svg></StatusButton>
        </div>
      </div>
    </footer>
  );
}

export default function App() {
  return (
    <div className="relative flex h-screen flex-col overflow-hidden bg-[#33322f] px-[2px] pt-[2px] font-['Noto_Sans','Noto_Sans_CJK_SC',sans-serif] text-xs text-[#e4e7eb]">
      <div className="flex min-h-0 flex-1 flex-col bg-[#222831] px-px pb-px">
        <Header />
        <div className="flex min-h-0 flex-1 flex-col border-x-[3px] border-b-[3px] border-[#3b4453]">
          <Ribbon />
          <FileTabs />
          <div className="h-[5px] shrink-0 bg-[#3b4453]" />
          <Canvas />
          <StatusBar />
        </div>
      </div>
      <div className="-mx-[2px] flex h-2 shrink-0 overflow-hidden bg-linear-to-r from-[#2a2024] via-[#232022] to-[#38232d] pl-[373px] pr-[53px]">
        <div className="w-40 bg-[#575356]" />
        <time className="ml-auto pr-[15px] leading-[18px] text-white">20:55:25</time>
      </div>
      <p className="pointer-events-none absolute bottom-[15px] right-1 z-30 whitespace-nowrap font-['Roboto'] text-[49px] leading-[56px] font-light text-[#c6c7c9] [text-shadow:1px_2px_2px_#1119]">
        CSDN @XdecadeXXX
      </p>
    </div>
  );
}
